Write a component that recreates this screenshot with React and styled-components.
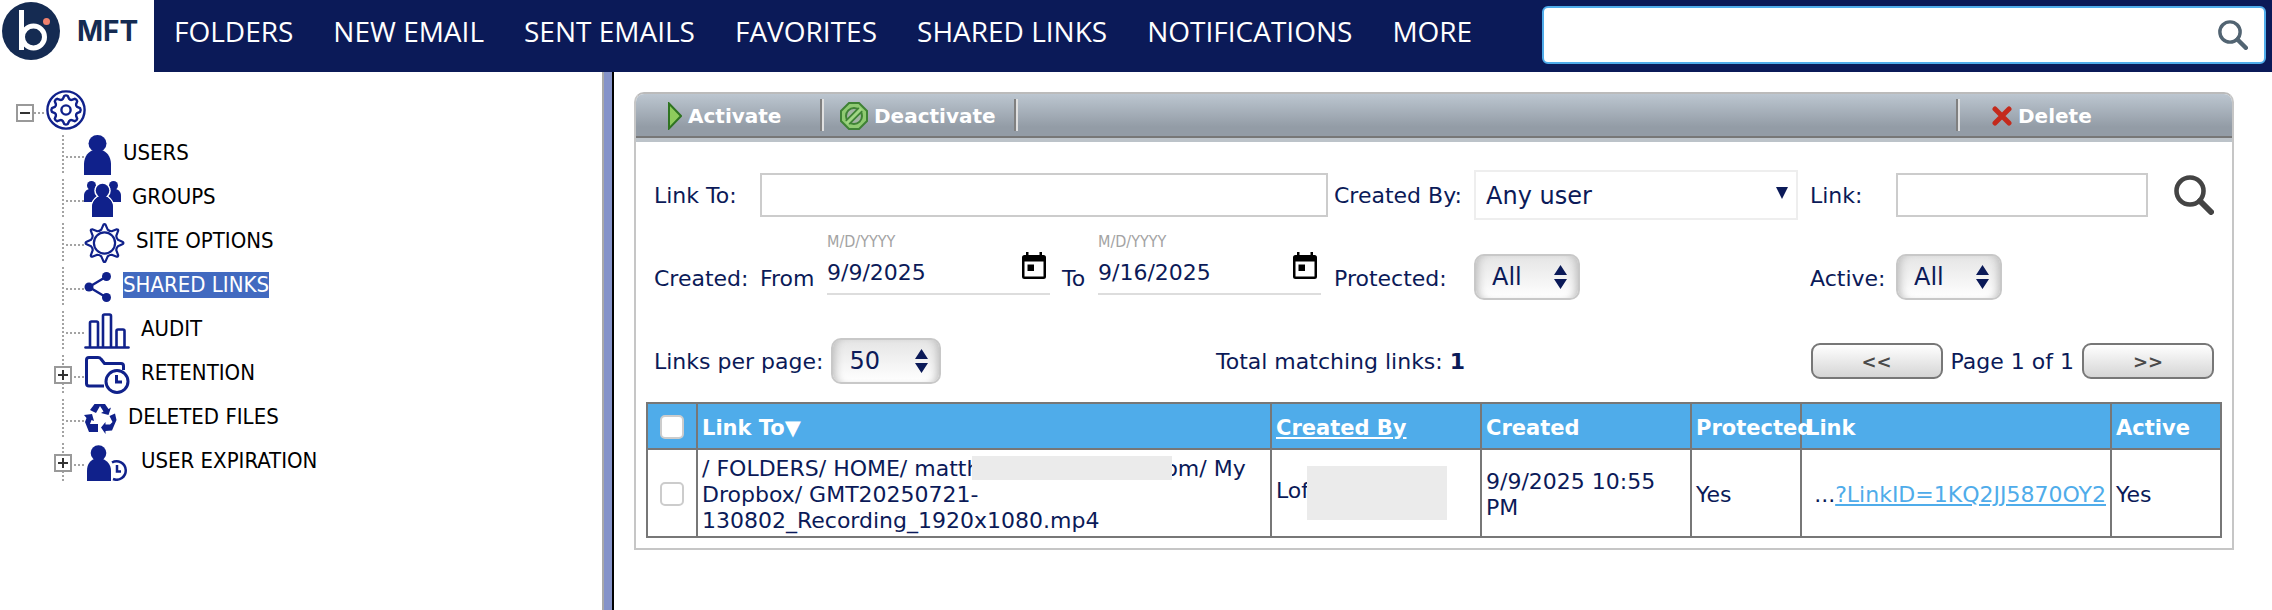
import React, { useState } from "react";
import styled, { createGlobalStyle, css } from "styled-components";

const navy = "#0b1a58";
const iconBlue = "#10218b";
const verdana = `Verdana, "DejaVu Sans", sans-serif`;

const GlobalStyle = createGlobalStyle`
  * {
    box-sizing: border-box;
  }
  body {
    margin: 0;
    background: white;
    color: ${navy};
    font-family: ${verdana};
    font-size: 22px;
    line-height: 26px;
  }
  button, input, select {
    font-family: inherit;
    color: inherit;
  }
`;

const Page = styled.div`
  min-height: 100vh;
  display: flex;
  flex-direction: column;
`;

/* ---------- header ---------- */

const Header = styled.header`
  display: flex;
  height: 72px;
  background: ${navy};
`;

const Brand = styled.a`
  display: flex;
  align-items: center;
  gap: 17px;
  width: 154px;
  padding: 0 0 10px 2px;
  background: white;
  color: #152b52;
  font: 700 28px/32px Inter, sans-serif;
  text-decoration: none;
`;

const Nav = styled.nav`
  flex: 1;
  display: flex;
  gap: 40px;
  padding: 11px 20px;
`;

const NavLink = styled.a`
  color: white;
  font: 28px/40px "Open Sans", sans-serif;
  text-decoration: none;
  white-space: nowrap;
`;

const SearchBox = styled.form`
  display: flex;
  align-items: center;
  width: 724px;
  height: 58px;
  margin: 6px 6px 0 0;
  padding-right: 16px;
  border: 2px solid #4facea;
  border-radius: 6px;
  background: white;
`;

const SearchInput = styled.input`
  flex: 1;
  height: 100%;
  padding: 0 12px;
  border: none;
  outline: none;
  background: transparent;
  font-size: 24px;
`;

const IconButton = styled.button`
  display: flex;
  align-items: center;
  justify-self: end;
  padding: 0;
  border: none;
  background: none;
  cursor: pointer;
`;

/* ---------- tree ---------- */

const Body = styled.div`
  flex: 1;
  display: flex;
`;

const Sidebar = styled.aside`
  width: 602px;
  padding-top: 18px;
`;

const Splitter = styled.div`
  width: 12px;
  border-left: 2px solid #a9a9a9;
  border-right: 2px solid black;
  background: #8593c9;
`;

const dotsX = "repeating-linear-gradient(90deg, #a3a3a3 0 2px, transparent 2px 4px)";
const dotsY = "repeating-linear-gradient(180deg, #a3a3a3 0 2px, transparent 2px 4px)";

const TreeRoot = styled.div`
  display: flex;
  align-items: center;
  height: 40px;
  padding-left: 16px;
`;

const RootDots = styled.span`
  width: 12px;
  height: 2px;
  margin-top: 6px;
  background: ${dotsX};
`;

const Toggle = styled.button`
  display: flex;
  align-items: center;
  justify-content: center;
  width: 18px;
  height: 18px;
  padding: 0;
  border: 2px solid #999;
  background: white;
  margin-top: ${(p) => (p.$root ? "6px" : "0")};
`;

const Tree = styled.ul`
  list-style: none;
  margin: 5px 0 0;
  padding: 0;
`;

const TreeRow = styled.li`
  display: flex;
  align-items: center;
  height: 39px;
  margin-bottom: 5px;
`;

const Branch = styled.span`
  display: flex;
  align-items: center;
  align-self: stretch;
  width: 84px;
  padding-left: 54px;
  background: ${dotsY} 62px 0 / 2px 39px no-repeat, ${dotsX} 66px 21px / 18px 2px no-repeat;
`;

const TreeLink = styled.a`
  display: flex;
  align-items: center;
  gap: 11px;
  color: black;
  font: 22px/26px "DejaVu Sans Condensed", "DejaVu Sans", sans-serif;
  font-stretch: condensed;
  text-decoration: none;
`;

const TreeLabel = styled.span`
  margin-bottom: 3px;
  ${(p) =>
    p.$selected &&
    css`
      background: #426ac0;
      color: white;
    `}
`;

/* ---------- panel ---------- */

const Main = styled.main`
  flex: 1;
  padding: 20px 38px 20px 20px;
`;

const Panel = styled.section`
  border: 2px solid #c6c6c6;
  border-top-color: #bbb;
  border-radius: 10px 10px 0 0;
  overflow: hidden;
`;

const Toolbar = styled.div`
  display: flex;
  align-items: center;
  height: 48px;
  border-bottom: 4px solid #bcc3c9;
  background: linear-gradient(#bcc6d0, #939ca6 75%, #939ca6 95%, #777 95%);
`;

const ToolButton = styled.button`
  display: flex;
  align-items: center;
  gap: 6px;
  width: ${(p) => p.$width};
  height: 40px;
  padding: 0 0 0 ${(p) => p.$indent};
  border: none;
  background: none;
  color: white;
  font: bold 20px/24px "DejaVu Sans", sans-serif;
`;

const ToolSeparator = styled.span`
  width: 4px;
  height: 32px;
  margin-bottom: 2px;
  border-left: 2px solid #808080;
  border-right: 2px solid #e0e0e0;
`;

const Spacer = styled.span`
  flex: 1;
`;

const Content = styled.div`
  padding: 28px 10px 10px;
`;

const Filters = styled.form`
  display: grid;
  grid-template-columns: 106px 1fr 140px 336px 86px 252px 66px;
  grid-template-rows: 50px 66px;
  row-gap: 14px;
  align-items: center;
  padding: 0 8px;
`;

const Label = styled.label`
  padding-top: 2px;
  white-space: nowrap;
  ${(p) =>
    p.$low &&
    css`
      align-self: end;
      line-height: 42px;
    `}
`;

const TextInput = styled.input`
  width: ${(p) => (p.$short ? "100%" : "calc(100% - 6px)")};
  height: 44px;
  padding: 0 8px;
  border: 2px solid #ccc;
  outline: none;
  font-size: 22px;
`;

const SelectWrap = styled.span`
  display: inline-block;
  position: relative;
  align-self: ${(p) => (p.$wide ? "center" : "end")};
  width: ${(p) => p.$width};
`;

const SelectArrow = styled.svg`
  position: absolute;
  top: ${(p) => (p.$wide ? "17px" : "11px")};
  right: ${(p) => (p.$wide ? "10px" : "13px")};
  pointer-events: none;
`;

const Select = styled.select`
  appearance: none;
  display: block;
  width: 100%;
  outline: none;
  font-size: 24px;
  ${(p) =>
    p.$wide
      ? css`
          height: 50px;
          padding: 2px 36px 0 10px;
          border: 2px solid #eee;
          background: white;
        `
      : css`
          height: 46px;
          padding: 0 30px 0 16px;
          border: 2px solid #c8c8c8;
          border-radius: 10px;
          background: linear-gradient(#e5e5e5, #fff);
          box-shadow: inset 8px 0 8px -6px #bbb, inset -8px 0 8px -6px #bbb;
        `}
`;

const DateRange = styled.div`
  align-self: end;
  display: flex;
  gap: 12px;
`;

const DateGroup = styled.div`
  display: grid;
  grid-template-columns: ${(p) => p.$labelWidth} 223px;
`;

const DateBox = styled.div`
  display: flex;
  flex-direction: column;
  margin-bottom: 5px;
  border-bottom: 2px solid #ddd;
`;

const DateHint = styled.span`
  color: #a3a3a3;
  font: 16px/20px "DejaVu Sans Condensed", "DejaVu Sans", sans-serif;
  font-stretch: condensed;
`;

const DateLine = styled.span`
  display: flex;
  align-items: flex-start;
  justify-content: space-between;
  height: 41px;
  padding-right: 4px;
`;

const DateInput = styled.input`
  width: 160px;
  height: 41px;
  padding: 0;
  border: none;
  outline: none;
  background: none;
  font-size: 22px;
`;

const Pager = styled.div`
  display: grid;
  grid-template-columns: 562px 1fr auto;
  align-items: center;
  padding: 0 8px;
  margin: 38px 0 18px;
`;

const PagerGroup = styled.div`
  display: flex;
  align-items: center;
  gap: 8px;
`;

const PagerText = styled.span`
  padding-top: 2px;
`;

const PageButton = styled.button`
  width: 132px;
  height: 36px;
  padding: 0;
  border: 2px solid #777;
  border-radius: 9px;
  background: linear-gradient(#fff, #d5d5d5);
  color: #4a4a4a;
  font-size: 18px;
  font-weight: bold;
`;

const Grid = styled.table`
  width: 100%;
  table-layout: fixed;
  border-collapse: collapse;
`;

const Col = styled.col`
  width: ${(p) => p.$width};
`;

const cell = css`
  border: 2px solid #777;
  padding: 6px 4px 2px;
  text-align: left;
`;

const Th = styled.th`
  ${cell}
  height: 46px;
  background: #4facea;
  color: white;
  font-size: 21px;
  white-space: nowrap;
`;

const Td = styled.td`
  ${cell}
  text-align: ${(p) => p.$align || "left"};
`;

const SortLink = styled.a`
  color: white;
`;

const ShareLink = styled.a`
  color: #4facea;
`;

const Check = styled.input`
  appearance: none;
  display: block;
  width: 24px;
  height: 24px;
  margin: 0 auto 2px;
  border: 2px solid #ccc;
  border-radius: 5px;
  background: white;
`;

// grey block that hides part of a name
const Redacted = styled.span`
  position: relative;
  display: inline-block;
  background: #ebebeb;
  ${(p) =>
    p.$tall
      ? css`
          width: 140px;
          height: 54px;
          margin: -20px 0 -8px -2px;
          vertical-align: -14px;
        `
      : css`
          width: 200px;
          height: 24px;
          margin: 0 -8px;
          vertical-align: top;
        `}
`;

/* ---------- icons ---------- */

function gearPath(cx, cy, teeth, inner, outer, root, tip) {
  const step = (Math.PI * 2) / teeth;
  const at = (r, a) => `${(cx + r * Math.sin(a)).toFixed(2)} ${(cy - r * Math.cos(a)).toFixed(2)}`;
  let d = "";
  for (let i = 0; i < teeth; i++) {
    const a = i * step;
    d += `${i ? "L" : "M"}${at(outer, a - step * tip)} Q${at(outer + 1, a)} ${at(outer, a + step * tip)} `;
    d += `L${at(inner, a + step * (0.5 - root))} Q${at(inner - 1, a + step * 0.5)} ${at(inner, a + step * (0.5 + root))} `;
  }
  return d + "Z";
}

const Logo = () => (
  <svg width="58" height="58" viewBox="0 0 58 58">
    <circle cx="29" cy="29" r="29" fill="#152b52" />
    <g fill="none" stroke="white" strokeWidth="5">
      <path d="M19.5 8V48" />
      <circle cx="31.500" cy="35" r="11" />
    </g>
    <circle cx="44.500" cy="19.500" r="3.500" fill="#f0816d" />
  </svg>
);

const Magnifier = ({ size, color }) => (
  <svg width={size} height={size} viewBox="0 0 40 40" fill="none" stroke={color}>
    <circle cx="16" cy="16" r="13.500" strokeWidth="4.600" />
    <path d="M26 26L37 37" strokeWidth="6" strokeLinecap="round" />
  </svg>
);

const RootIcon = () => (
  <svg width="40" height="40" viewBox="0 0 40 40" fill="none" stroke={iconBlue} strokeWidth="2.400" strokeLinejoin="round">
    <circle cx="20" cy="20" r="18.600" />
    <path d={gearPath(20, 20, 8, 11.6, 14.2, 0.16, 0.16)} />
    <circle cx="20" cy="20" r="4.600" />
  </svg>
);

const UserIcon = () => (
  <svg width="28" height="40" viewBox="0 0 28 40" fill={iconBlue}>
    <ellipse cx="13.500" cy="8.500" rx="9" ry="8.500" />
    <path d="M0 40V29C0 21 5 16.500 9 15H18C22 16.500 27 21 27 29V40Z" />
  </svg>
);

const GroupIcon = () => (
  <svg width="37" height="36" viewBox="0 0 37 36" fill={iconBlue}>
    <circle cx="7.500" cy="4.500" r="4.500" />
    <circle cx="29.500" cy="4.500" r="4.500" />
    <path d="M0 21V15C0 11 2 9 5 8H12L17 14V21Z" />
    <path d="M37 21V15C37 11 35 9 32 8H25L20 14V21Z" />
    <g stroke="white" strokeWidth="3" paintOrder="stroke">
      <path d="M8 36V27C8 21 11 18 14 16H23C26 18 29 21 29 27V36Z" />
      <circle cx="18.500" cy="9.500" r="6.800" />
    </g>
    <path d="M8 36V27C8 21 11 18 14 16L18 12L23 16C26 18 29 21 29 27V36Z" />
  </svg>
);

const OptionsIcon = () => (
  <svg width="41" height="40" viewBox="0 0 41 40" fill="none" stroke={iconBlue} strokeWidth="2.200" strokeLinejoin="round">
    <path d={gearPath(20.5, 20, 8, 13.8, 18.4, 0.2, 0.07)} />
    <circle cx="20.500" cy="20" r="10.600" />
  </svg>
);

const ShareIcon = () => (
  <svg width="28" height="30" viewBox="0 0 28 30" fill={iconBlue}>
    <path d="M22.500 4.500L5 15L22.500 25.500" fill="none" stroke={iconBlue} strokeWidth="2.400" />
    <circle cx="22.500" cy="4.500" r="4.500" />
    <circle cx="5" cy="15" r="4.500" />
    <circle cx="22.500" cy="25.500" r="4.500" />
  </svg>
);

const AuditIcon = () => (
  <svg width="46" height="36" viewBox="0 0 46 36" fill="none" stroke={iconBlue} strokeWidth="2.600">
    <path d="M1.500 34.500H44.500" strokeLinecap="round" />
    <path d="M6 34V10Q6 8.500 7.500 8.500H12.500Q14 8.500 14 10V34" />
    <path d="M19 34V3Q19 1.500 20.500 1.500H25.500Q27 1.500 27 3V34" />
    <path d="M32.500 34V18Q32.500 16.500 34 16.500H39Q40.500 16.500 40.500 18V34" />
  </svg>
);

const RetentionIcon = () => (
  <svg width="46" height="38" viewBox="0 0 46 38" fill="none" stroke={iconBlue} strokeWidth="3">
    <path d="M20 30H5Q2.500 30 2.500 27.500V4Q2.500 1.500 5 1.500H14Q16 1.500 17 3L20.500 7.500H37Q39.500 7.500 39.500 10V14" />
    <circle cx="33" cy="25.500" r="11" fill="white" />
    <path d="M32.500 19V26H38" />
  </svg>
);

const RecycleIcon = () => (
  <svg width="33" height="30" viewBox="0 0 33 30" fill={iconBlue}>
    <path d="M10.500 0H21L24.500 5L27 3.500L24.500 11L17 9L19.500 7.500L16 2L12 9L6 6Z" />
    <path d="M25.500 12L31 9.500L32.500 16L28 26.500L21.500 27V30L17 23.500L21.500 18V20.500H26L28.500 18Z" />
    <path d="M0 11L8 10L10 17L7.500 16L6 20H14V28H5L1 18L2.500 14Z" />
  </svg>
);

const UserExpirationIcon = () => (
  <svg width="46" height="36" viewBox="0 0 46 36" fill={iconBlue}>
    <circle cx="14.500" cy="8" r="7.800" />
    <path d="M3 36V26C3 19 6 16 10 14H19C23 16 27 19 27 26V36Z" />
    <path d="M28 17.500A9.200 9.200 0 1 1 29 34" fill="none" stroke={iconBlue} strokeWidth="2.500" />
    <path d="M33 20V26.500H37" fill="none" stroke={iconBlue} strokeWidth="2.500" />
  </svg>
);

const ToggleMark = ({ open }) => (
  <svg width="10" height="10" viewBox="0 0 10 10" stroke="#333" strokeWidth="2">
    <path d={open ? "M0 5H10" : "M0 5H10M5 0V10"} />
  </svg>
);

const ActivateIcon = () => (
  <svg width="14" height="28" viewBox="0 0 14 28">
    <path d="M1 1.500L13 14L1 26.500Z" fill="#8ecb5c" stroke="#2f7421" strokeWidth="2" />
  </svg>
);

const DeactivateIcon = () => (
  <svg width="28" height="28" viewBox="0 0 28 28">
    <path d="M9 1H19L27 9V19L19 27H9L1 19V9Z" fill="#8fca72" stroke="#3f8235" strokeWidth="2" />
    <circle cx="14" cy="14" r="8" fill="#a5b5a5" stroke="#3f8235" strokeWidth="2" />
    <path d="M7.500 20.500L20.500 7.500" stroke="#3f8235" strokeWidth="6.500" />
    <path d="M6.500 21.500L21.500 6.500" stroke="#a0d684" strokeWidth="3" />
  </svg>
);

const DeleteIcon = () => (
  <svg width="20" height="20" viewBox="0 0 20 20" stroke="#c42a1c" strokeWidth="5" strokeLinecap="round">
    <path d="M3 3L17 17M17 3L3 17" />
  </svg>
);

const CalendarIcon = () => (
  <svg width="24" height="28" viewBox="0 0 24 28">
    <path d="M4 0H6.500V3H17.500V0H20V3H21.500Q24 3 24 5.500V24.500Q24 27 21.500 27H2.500Q0 27 0 24.500V5.500Q0 3 2.500 3H4ZM2.500 9.500V24.500H21.500V9.500Z" fillRule="evenodd" />
    <path d="M5.500 12.500H12V19H5.500Z" />
  </svg>
);

/* ---------- pieces ---------- */

const navItems = [
  "FOLDERS",
  "NEW EMAIL",
  "SENT EMAILS",
  "FAVORITES",
  "SHARED LINKS",
  "NOTIFICATIONS",
  "MORE",
];

const treeItems = [
  { label: "USERS", Icon: UserIcon },
  { label: "GROUPS", Icon: GroupIcon },
  { label: "SITE OPTIONS", Icon: OptionsIcon },
  { label: "SHARED LINKS", Icon: ShareIcon },
  { label: "AUDIT", Icon: AuditIcon },
  { label: "RETENTION", Icon: RetentionIcon, expandable: true },
  { label: "DELETED FILES", Icon: RecycleIcon },
  { label: "USER EXPIRATION", Icon: UserExpirationIcon, expandable: true },
];

function SpinSelect({ id, width, options }) {
  return (
    <SelectWrap $width={width}>
      <Select id={id}>
        {options.map((o) => (
          <option key={o}>{o}</option>
        ))}
      </Select>
      <SelectArrow width="13" height="24" viewBox="0 0 13 24" fill={navy}>
        <path d="M6.500 0L13 10H0ZM0 14H13L6.500 24Z" />
      </SelectArrow>
    </SelectWrap>
  );
}

function DateField({ id, label, labelWidth, value }) {
  const [date, setDate] = useState(value);
  return (
    <DateGroup $labelWidth={labelWidth}>
      <Label $low htmlFor={id}>
        {label}
      </Label>
      <DateBox>
        <DateHint>M/D/YYYY</DateHint>
        <DateLine>
          <DateInput id={id} value={date} onChange={(e) => setDate(e.target.value)} />
          <IconButton type="button" aria-label="Open calendar">
            <CalendarIcon />
          </IconButton>
        </DateLine>
      </DateBox>
    </DateGroup>
  );
}

export default function App() {
  const [selected, setSelected] = useState("SHARED LINKS");

  return (
    <Page>
      <GlobalStyle />
      <Header>
        <Brand href="#">
          <Logo />
          MFT
        </Brand>
        <Nav>
          {navItems.map((item) => (
            <NavLink href="#" key={item}>
              {item}
            </NavLink>
          ))}
        </Nav>
        <SearchBox>
          <SearchInput aria-label="Search" />
          <IconButton type="button" aria-label="Search">
            <Magnifier size={30} color="#526472" />
          </IconButton>
        </SearchBox>
      </Header>

      <Body>
        <Sidebar>
          <TreeRoot>
            <Toggle $root aria-label="Collapse">
              <ToggleMark open />
            </Toggle>
            <RootDots />
            <RootIcon />
          </TreeRoot>
          <Tree>
            {treeItems.map(({ label, Icon, expandable }) => (
              <TreeRow key={label}>
                <Branch>
                  {expandable && (
                    <Toggle aria-label={`Expand ${label}`}>
                      <ToggleMark />
                    </Toggle>
                  )}
                </Branch>
                <TreeLink href="#" onClick={() => setSelected(label)}>
                  <Icon />
                  <TreeLabel $selected={selected === label}>{label}</TreeLabel>
                </TreeLink>
              </TreeRow>
            ))}
          </Tree>
        </Sidebar>
        <Splitter />

        <Main>
          <Panel>
            <Toolbar>
              <ToolButton $width="184px" $indent="32px">
                <ActivateIcon />
                Activate
              </ToolButton>
              <ToolSeparator />
              <ToolButton $width="190px" $indent="16px">
                <DeactivateIcon />
                Deactivate
              </ToolButton>
              <ToolSeparator />
              <Spacer />
              <ToolSeparator />
              <ToolButton $width="272px" $indent="32px">
                <DeleteIcon />
                Delete
              </ToolButton>
            </Toolbar>

            <Content>
              <Filters>
                <Label htmlFor="linkTo">Link To:</Label>
                <TextInput id="linkTo" />
                <Label htmlFor="createdBy">Created By:</Label>
                <SelectWrap $wide $width="324px">
                  <Select $wide id="createdBy">
                    <option>Any user</option>
                  </Select>
                  <SelectArrow $wide width="12" height="12" viewBox="0 0 12 12" fill={navy}>
                    <path d="M0 0H12L6 12Z" />
                  </SelectArrow>
                </SelectWrap>
                <Label htmlFor="link">Link:</Label>
                <TextInput $short id="link" />
                <IconButton type="button" aria-label="Find links">
                  <Magnifier size={40} color="#444" />
                </IconButton>

                <Label as="span" $low>
                  Created:
                </Label>
                <DateRange>
                  <DateField id="from" label="From" labelWidth="67px" value="9/9/2025" />
                  <DateField id="to" label="To" labelWidth="36px" value="9/16/2025" />
                </DateRange>
                <Label $low htmlFor="protected">
                  Protected:
                </Label>
                <SpinSelect id="protected" width="106px" options={["All", "Yes", "No"]} />
                <Label $low htmlFor="active">
                  Active:
                </Label>
                <SpinSelect id="active" width="106px" options={["All", "Yes", "No"]} />
              </Filters>

              <Pager>
                <PagerGroup>
                  <Label htmlFor="perPage">Links per page:</Label>
                  <SpinSelect id="perPage" width="110px" options={["50", "100"]} />
                </PagerGroup>
                <PagerText>
                  Total matching links: <b>1</b>
                </PagerText>
                <PagerGroup>
                  <PageButton>&lt;&lt;</PageButton>
                  <PagerText>Page 1 of 1</PagerText>
                  <PageButton>&gt;&gt;</PageButton>
                </PagerGroup>
              </Pager>

              <Grid>
                <colgroup>
                  <Col $width="50px" />
                  <col />
                  <Col $width="210px" />
                  <Col $width="210px" />
                  <Col $width="110px" />
                  <Col $width="310px" />
                  <Col $width="110px" />
                </colgroup>
                <thead>
                  <tr>
                    <Th>
                      <Check type="checkbox" aria-label="Select all" />
                    </Th>
                    <Th>Link To▼</Th>
                    <Th>
                      <SortLink href="#">Created By</SortLink>
                    </Th>
                    <Th>Created</Th>
                    <Th>Protected</Th>
                    <Th>Link</Th>
                    <Th>Active</Th>
                  </tr>
                </thead>
                <tbody>
                  <tr>
                    <Td>
                      <Check type="checkbox" aria-label="Select link" />
                    </Td>
                    <Td>
                      / FOLDERS/ HOME/ matth
                      <Redacted />
                      om/ My Dropbox/ GMT20250721-130802_Recording_1920x1080.mp4
                    </Td>
                    <Td>
                      Lof
                      <Redacted $tall />
                    </Td>
                    <Td>9/9/2025 10:55 PM</Td>
                    <Td>Yes</Td>
                    <Td $align="right">
                      ...<ShareLink href="#">?LinkID=1KQ2JJ5870OY2</ShareLink>
                    </Td>
                    <Td>Yes</Td>
                  </tr>
                </tbody>
              </Grid>
            </Content>
          </Panel>
        </Main>
      </Body>
    </Page>
  );
}
